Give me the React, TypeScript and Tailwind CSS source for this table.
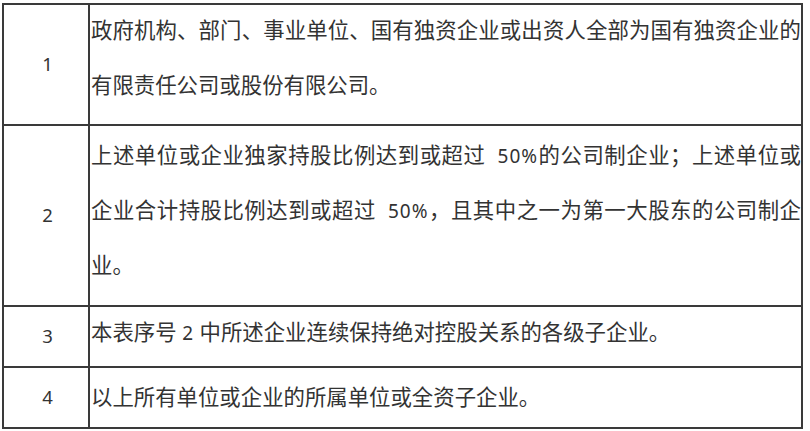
const FONT = "font-['Noto_Sans','Noto_Sans_CJK_SC',sans-serif]";

type Row = {
  no: string;
  lines: string[];
  pad: string;
  lh: string;
};

const ROWS: Row[] = [
  {
    no: '1',
    lines: [
      '政府机构、部门、事业单位、国有独资企业或出资人全部为国有独资企业的',
      '有限责任公司或股份有限公司。',
    ],
    pad: '-mt-[3px] pb-[12px]',
    lh: 'leading-[55px]',
  },
  {
    no: '2',
    lines: [
      '上述单位或企业独家持股比例达到或超过\u00a0 |50%|的公司制企业；上述单位或',
      '企业合计持股比例达到或超过\u00a0 |50%|，且其中之一为第一大股东的公司制企',
      '业。',
    ],
    pad: 'pt-[1px] pb-[13px]',
    lh: 'leading-[55px]',
  },
  {
    no: '3',
    lines: ['本表序号 |2| 中所述企业连续保持绝对控股关系的各级子企业。'],
    pad: 'pt-[2px] pb-[11px]',
    lh: 'leading-[46px]',
  },
  {
    no: '4',
    lines: ['以上所有单位或企业的所属单位或全资子企业。'],
    pad: 'pt-[1px] pb-[3px]',
    lh: 'leading-[55px]',
  },
];

// segments wrapped in |..| are latin runs, set a bit smaller
function Line({ text }: { text: string }) {
  const parts = text.split('|');
  return (
    <>
      {parts.map((p, i) =>
        i % 2 === 1 ? (
          <span key={i} className="text-[19px] tracking-[1px] leading-none">
            {p}
          </span>
        ) : (
          <span key={i}>{p}</span>
        )
      )}
    </>
  );
}

export default function App() {
  return (
    <div className={`w-[810px] h-[431px] bg-white pt-[3px] pl-[2px] ${FONT}`}>
      <div className="w-[801px] border-2 border-[#3a3a3a] text-[#333333]">
        {ROWS.map((row, idx) => (
          <div
            key={row.no}
            className={`flex ${idx > 0 ? 'border-t-2 border-[#3a3a3a]' : ''}`}
          >
            <div className="w-[86px] shrink-0 border-r-2 border-[#3a3a3a] flex items-center justify-center text-[18.5px] pl-[3px] pb-[2px]">
              {row.no}
            </div>
            <div className={`flex-1 pl-[1px] text-[21.4px] ${row.pad} ${row.lh}`}>
              {row.lines.map((l, i) => {
                const last = i === row.lines.length - 1;
                return (
                  <div
                    key={i}
                    className={last ? 'text-left' : 'text-justify [text-align-last:justify]'}
                  >
                    <Line text={l} />
                  </div>
                );
              })}
            </div>
          </div>
        ))}
      </div>
    </div>
  );
}
